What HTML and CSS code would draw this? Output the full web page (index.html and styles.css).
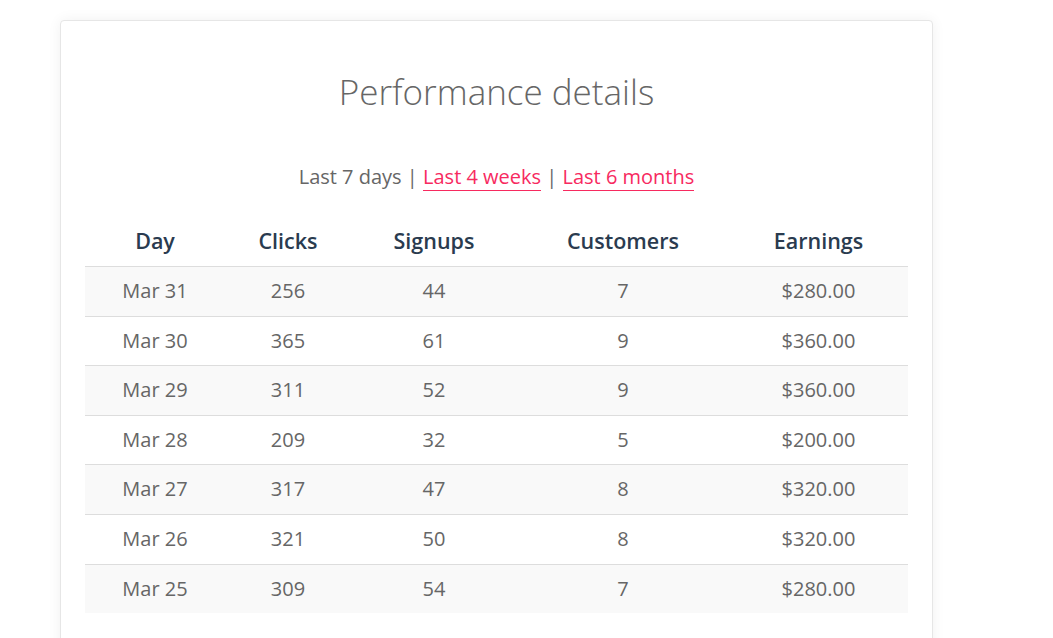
FILE: index.html
```html
<!DOCTYPE html>
<html>
<head>
<meta charset="utf-8">
<link rel="stylesheet" href="styles.css">
</head>
<body>
<div class="page">
  <div class="card">
    <h1 class="title">Performance details</h1>
    <div class="filters">
      <span class="current">Last 7 days</span>
      <span class="sep">|</span>
      <a class="link" href="#">Last 4 weeks</a>
      <span class="sep">|</span>
      <a class="link" href="#">Last 6 months</a>
    </div>
    <table class="stats">
      <colgroup>
        <col class="c-day">
        <col class="c-clicks">
        <col class="c-signups">
        <col class="c-customers">
        <col class="c-earnings">
      </colgroup>
      <thead>
        <tr><th>Day</th><th>Clicks</th><th>Signups</th><th>Customers</th><th>Earnings</th></tr>
      </thead>
      <tbody>
        <tr><td>Mar 31</td><td>256</td><td>44</td><td>7</td><td>$280.00</td></tr>
        <tr><td>Mar 30</td><td>365</td><td>61</td><td>9</td><td>$360.00</td></tr>
        <tr><td>Mar 29</td><td>311</td><td>52</td><td>9</td><td>$360.00</td></tr>
        <tr><td>Mar 28</td><td>209</td><td>32</td><td>5</td><td>$200.00</td></tr>
        <tr><td>Mar 27</td><td>317</td><td>47</td><td>8</td><td>$320.00</td></tr>
        <tr><td>Mar 26</td><td>321</td><td>50</td><td>8</td><td>$320.00</td></tr>
        <tr><td>Mar 25</td><td>309</td><td>54</td><td>7</td><td>$280.00</td></tr>
      </tbody>
    </table>
  </div>
</div>
</body>
</html>
```

FILE: styles.css
```css
* { box-sizing: border-box; }
html, body { margin: 0; padding: 0; background: #ffffff; }
body {
  font-family: "Open Sans", "Noto Sans", sans-serif;
  color: #666666;
}
.page {
  padding: 20px 0 0 60px;
}
.card {
  width: 873px;
  background: #ffffff;
  border: 1px solid #e6e6e6;
  border-radius: 4px;
  box-shadow: 0 0 14px rgba(0, 0, 0, 0.06);
  padding: 52px 24px 40px;
}
.title {
  margin: 0;
  text-align: center;
  font-size: 35px;
  font-weight: 300;
  line-height: 38px;
  color: #666666;
}
.filters {
  margin-top: 53px;
  text-align: center;
  font-size: 20px;
  line-height: 26px;
  color: #666666;
}
.link {
  color: #f72a5f;
  text-decoration: none;
  border-bottom: 1px solid #f72a5f;
}
.stats {
  margin-top: 26px;
  width: 823px;
  border-collapse: collapse;
  table-layout: fixed;
}
.c-day { width: 140px; }
.c-clicks { width: 126px; }
.c-signups { width: 166px; }
.c-customers { width: 212px; }
.c-earnings { width: 179px; }
.stats th, .stats td {
  text-align: center;
  padding: 12px 6px;
  line-height: 24.6px;
}
.stats th {
  font-size: 21.5px;
  font-weight: 600;
  color: #2a3b4f;
  border-bottom: 1px solid #dddddd;
  line-height: 26px;
}
.stats td {
  font-size: 20px;
  color: #666666;
}
.stats tbody tr + tr td { border-top: 1px solid #dddddd; }
.stats tbody tr:nth-child(odd) { background: #f9f9f9; }
```
